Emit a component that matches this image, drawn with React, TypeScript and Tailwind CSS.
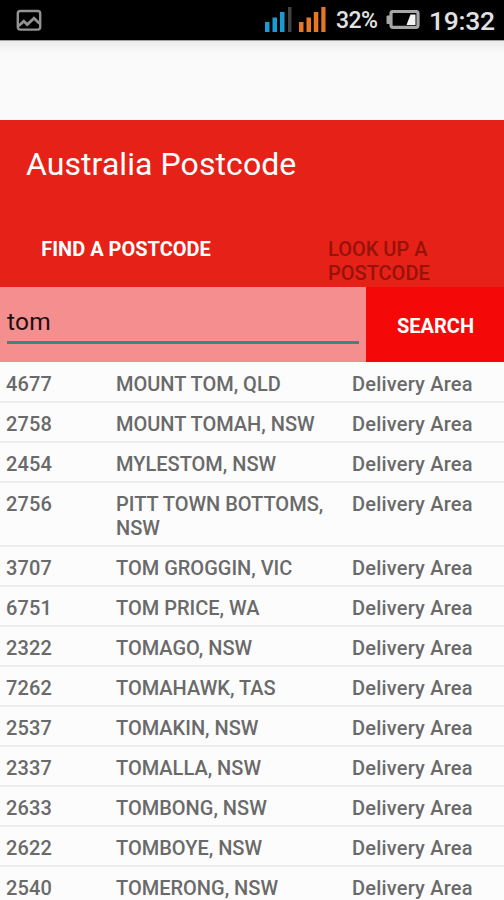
import { useState } from 'react';

interface Place {
  postcode: string;
  name: string;
  type: string;
}

const places: Place[] = [
  { postcode: '4677', name: 'MOUNT TOM, QLD', type: 'Delivery Area' },
  { postcode: '2758', name: 'MOUNT TOMAH, NSW', type: 'Delivery Area' },
  { postcode: '2454', name: 'MYLESTOM, NSW', type: 'Delivery Area' },
  { postcode: '2756', name: 'PITT TOWN BOTTOMS, NSW', type: 'Delivery Area' },
  { postcode: '3707', name: 'TOM GROGGIN, VIC', type: 'Delivery Area' },
  { postcode: '6751', name: 'TOM PRICE, WA', type: 'Delivery Area' },
  { postcode: '2322', name: 'TOMAGO, NSW', type: 'Delivery Area' },
  { postcode: '7262', name: 'TOMAHAWK, TAS', type: 'Delivery Area' },
  { postcode: '2537', name: 'TOMAKIN, NSW', type: 'Delivery Area' },
  { postcode: '2337', name: 'TOMALLA, NSW', type: 'Delivery Area' },
  { postcode: '2633', name: 'TOMBONG, NSW', type: 'Delivery Area' },
  { postcode: '2622', name: 'TOMBOYE, NSW', type: 'Delivery Area' },
  { postcode: '2540', name: 'TOMERONG, NSW', type: 'Delivery Area' },
];

const StatusBar = () => (
  <div className="flex h-10 shrink-0 items-center bg-black text-[#e2e2e2]">
    <svg className="ml-4 h-6 w-[26px]" viewBox="0 0 26 24" fill="none" stroke="#929292" strokeWidth="2.4">
      <rect x="1.8" y="3" width="22.4" height="18.6" rx="2.5" />
      <path d="M2.5 18 L7.8 13.2 L11.3 16.5 L18 10.2 L23.5 15.5" strokeWidth="2.8" />
    </svg>
    {/* Two SIM signals */}
    <svg className="ml-auto h-8 w-[62px]" viewBox="0 0 62 32">
      <g fill="#199bd8">
        <rect x="0" y="18" width="4.5" height="10" />
        <rect x="7.5" y="13.5" width="4.5" height="14.5" />
        <rect x="15" y="8" width="4.5" height="20" />
      </g>
      <rect x="23" y="3" width="3.5" height="25" fill="#424242" />
      <g fill="#e87722">
        <rect x="34" y="18" width="4.5" height="10" />
        <rect x="41.5" y="13.5" width="4.5" height="14.5" />
        <rect x="48.8" y="8" width="4.5" height="20" />
        <rect x="56.3" y="3" width="4.2" height="25" />
      </g>
    </svg>
    <span className="ml-[9px] mt-[3px] w-[43px] whitespace-nowrap text-[23px] font-medium tracking-[-0.6px]">32%</span>
    <svg className="ml-[7px] h-5 w-[34px]" viewBox="0 0 34 20">
      <rect x="5" y="1.5" width="27" height="15.8" rx="2" fill="none" stroke="#a6a6a6" strokeWidth="3.2" />
      <rect x="0.5" y="5.5" width="4" height="8.5" rx="1" fill="#a6a6a6" />
      <path d="M24.5 4.5 H29.5 V15 H20.5 Z" fill="#f2f2f2" />
    </svg>
    <span className="ml-[9px] mr-[9px] mt-[2px] w-[66px] whitespace-nowrap text-[26.5px] font-medium tracking-[-0.3px]">19:32</span>
  </div>
);

const PlaceRow = ({ place }: { place: Place }) => (
  <li className="flex border-b-2 border-[#ececec] pb-[5px] pl-[6px] pt-[9px] text-[20px] font-medium leading-6 text-[#6a6a6a]">
    <span className="w-[110px] shrink-0 tracking-[0.1px]">{place.postcode}</span>
    <span className="w-[236px] shrink-0 pr-5">{place.name}</span>
    <span className="whitespace-nowrap tracking-[0.2px]">{place.type}</span>
  </li>
);

export default function App() {
  const [query, setQuery] = useState('tom');

  return (
    <div className="flex h-[900px] w-[504px] flex-col overflow-hidden bg-[#fcfcfc] font-['Roboto',sans-serif]">
      <StatusBar />
      <div className="h-20 shrink-0 border-t border-[#a0a0a0] bg-linear-to-b from-[#ebebeb] to-[#fafafa] to-15%" />

      <header className="flex h-[167px] shrink-0 flex-col bg-[#e62117] text-white">
        <h1 className="pl-[26px] pt-[25px] text-[32px] leading-[38px] tracking-[0.07px]">Australia Postcode</h1>
        <nav className="mt-[54px] flex items-start text-[20px] leading-6">
          <button className="w-[252px] whitespace-nowrap text-center font-bold">FIND A POSTCODE</button>
          <button className="ml-[76px] w-[110px] text-left font-medium text-[#971209]">LOOK UP A POSTCODE</button>
        </nav>
      </header>

      <div className="flex h-[75px] shrink-0">
        <div className="flex-1 bg-[#f58e8e] px-[7px] pt-[19px]">
          <input
            value={query}
            onChange={(e) => setQuery(e.target.value)}
            className="block h-[38px] w-full border-b-[3px] border-[#2b8f7b] bg-transparent pb-[5px] text-[24.5px] tracking-[0.3px] text-[#1f1010] outline-none"
          />
        </div>
        <button className="w-[138px] bg-[#f40808] pl-px pt-[2px] text-[20px] font-bold text-white">SEARCH</button>
      </div>

      <ul className="pt-px">
        {places.map((place) => (
          <PlaceRow key={place.postcode} place={place} />
        ))}
      </ul>
    </div>
  );
}
